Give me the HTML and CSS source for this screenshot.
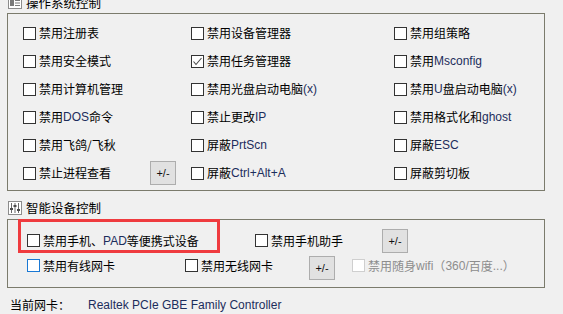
FILE: index.html
```html
<!DOCTYPE html>
<html lang="zh-CN">
<head>
<meta charset="utf-8">
<title>操作系统控制</title>
<link rel="stylesheet" href="styles.css">
</head>
<body>
<div class="page">
  <div class="group-title">
    <svg class="gicon" width="14" height="12" viewBox="0 0 14 12">
      <rect x="0.5" y="0.5" width="13" height="11" fill="#fff" stroke="#8c8c8c"/>
      <rect x="2" y="3" width="4" height="6" fill="#7a7a7a"/>
      <rect x="7" y="3" width="5" height="1" fill="#7a7a7a"/>
      <rect x="7" y="5.5" width="5" height="1" fill="#7a7a7a"/>
      <rect x="7" y="8" width="5" height="1" fill="#7a7a7a"/>
    </svg>
    <span>操作系统控制</span>
  </div>
  <div class="box os-box">
    <div class="os-grid">
      <label class="item"><span class="cb"></span>禁用注册表</label>
      <label class="item"><span class="cb"></span>禁用设备管理器</label>
      <label class="item"><span class="cb"></span>禁用组策略</label>

      <label class="item"><span class="cb"></span>禁用安全模式</label>
      <label class="item"><span class="cb checked"><svg width="11" height="11" viewBox="0 0 11 11"><polyline points="1.5,5.5 4,8.5 9.5,2" fill="none" stroke="#4a4a4a" stroke-width="1.1"/></svg></span>禁用任务管理器</label>
      <label class="item"><span class="cb"></span>禁用<span class="en">Msconfig</span></label>

      <label class="item"><span class="cb"></span>禁用计算机管理</label>
      <label class="item"><span class="cb"></span>禁用光盘启动电脑<span class="en">(x)</span></label>
      <label class="item"><span class="cb"></span>禁用<span class="en">U</span>盘启动电脑<span class="en">(x)</span></label>

      <label class="item"><span class="cb"></span>禁用<span class="en">DOS</span>命令</label>
      <label class="item"><span class="cb"></span>禁止更改<span class="en">IP</span></label>
      <label class="item"><span class="cb"></span>禁用格式化和<span class="en">ghost</span></label>

      <label class="item"><span class="cb"></span>禁用飞鸽/飞秋</label>
      <label class="item"><span class="cb"></span>屏蔽<span class="en">PrtScn</span></label>
      <label class="item"><span class="cb"></span>屏蔽<span class="en">ESC</span></label>

      <div class="item"><label class="item"><span class="cb"></span>禁止进程查看</label><button class="btn btn-os">+/-</button></div>
      <label class="item"><span class="cb"></span>屏蔽<span class="en">Ctrl+Alt+A</span></label>
      <label class="item"><span class="cb"></span>屏蔽剪切板</label>
    </div>
  </div>

  <div class="group-title second">
    <svg class="gicon" width="14" height="14" viewBox="0 0 14 14">
      <rect x="0.5" y="0.5" width="13" height="13" fill="#fff" stroke="#8c8c8c"/>
      <rect x="3" y="2" width="1" height="10" fill="#6a6a6a"/>
      <rect x="6.5" y="2" width="1" height="10" fill="#6a6a6a"/>
      <rect x="10" y="2" width="1" height="10" fill="#6a6a6a"/>
      <rect x="2" y="7" width="3" height="2" fill="#4a4a4a"/>
      <rect x="5.5" y="4" width="3" height="2" fill="#4a4a4a"/>
      <rect x="9" y="8" width="3" height="2" fill="#4a4a4a"/>
    </svg>
    <span>智能设备控制</span>
  </div>
  <div class="box dev-box">
    <div class="dev-row">
      <label class="item w228"><span class="cb"></span>禁用手机、<span class="en">PAD</span>等便携式设备</label>
      <label class="item w127"><span class="cb"></span>禁用手机助手</label>
      <button class="btn">+/-</button>
    </div>
    <div class="dev-row">
      <label class="item w158"><span class="cb focus"></span>禁用有线网卡</label>
      <label class="item w124"><span class="cb"></span>禁用无线网卡</label>
      <button class="btn btn-low">+/-</button>
      <label class="item disabled"><span class="cb dis"></span>禁用随身<span class="en">wifi</span>（<span class="en">360/</span>百度<span class="en">...</span>）</label>
    </div>
    <div class="highlight"></div>
  </div>

  <div class="footer">
    <span class="flabel">当前网卡：</span>
    <span class="en">Realtek PCIe GBE Family Controller</span>
  </div>
</div>
</body>
</html>
```

FILE: styles.css
```css
html, body {
  margin: 0;
  padding: 0;
  background: #f0f0f0;
}
body {
  font-family: "Noto Sans CJK SC", "Liberation Sans", sans-serif;
  font-size: 12px;
  color: #000;
  overflow: hidden;
}
.page {
  margin-top: -5px;
  width: 563px;
}
.en {
  font-family: "Liberation Sans", "Noto Sans CJK SC", sans-serif;
  color: #1c2d5c;
}
.group-title {
  display: flex;
  align-items: center;
  gap: 4px;
  height: 16px;
  line-height: 16px;
  padding-left: 8px;
  font-size: 12.5px;
}
.group-title.second {
  margin-top: 9px;
}
.gicon {
  display: block;
  flex: none;
}
.box {
  margin-left: 7px;
  width: 536px;
  border: 1px solid #7b7b6c;
  box-sizing: content-box;
}
.os-box {
  margin-top: 2px;
  height: 168px;
  padding: 5px 0 3px 15px;
  width: 521px;
}
.os-grid {
  display: grid;
  grid-template-columns: 168px 203px 1fr;
  grid-auto-rows: 28px;
}
.item {
  display: flex;
  align-items: center;
  white-space: nowrap;
  line-height: 16px;
}
.cb {
  flex: none;
  width: 11px;
  height: 11px;
  border: 1px solid #333;
  background: #fff;
  margin-right: 3px;
  display: flex;
  align-items: center;
  justify-content: center;
}
.cb svg { display: block; }
.cb.focus { border-color: #1978d4; }
.cb.dis { border-color: #cfcfcf; }
.disabled { color: #8d8d8d; }
.disabled .en { color: #8d8d8d; }
.btn {
  flex: none;
  width: 26px;
  height: 24px;
  padding: 0;
  background: #e1e1e1;
  border: 1px solid #adadad;
  font-family: "Liberation Sans", sans-serif;
  font-size: 11px;
  color: #111;
}
.btn-os { margin-left: 39px; }
.dev-box {
  position: relative;
  margin-top: 3px;
  height: 50px;
  padding: 8px 0 9px 19px;
  width: 517px;
}
.dev-row {
  display: flex;
  align-items: center;
  height: 25px;
}
.w228 { width: 228px; }
.w127 { width: 127px; }
.w158 { width: 158px; }
.w124 { width: 124px; }
.btn-low { margin-top: 4px; margin-right: 17px; }
.highlight {
  position: absolute;
  left: 10px;
  top: -1px;
  width: 202px;
  height: 34px;
  box-sizing: border-box;
  border: 3px solid #ef3b3f;
}
.footer {
  display: flex;
  margin-top: 9px;
  padding-left: 10px;
  height: 16px;
  line-height: 16px;
}
.flabel { width: 78px; }
```
